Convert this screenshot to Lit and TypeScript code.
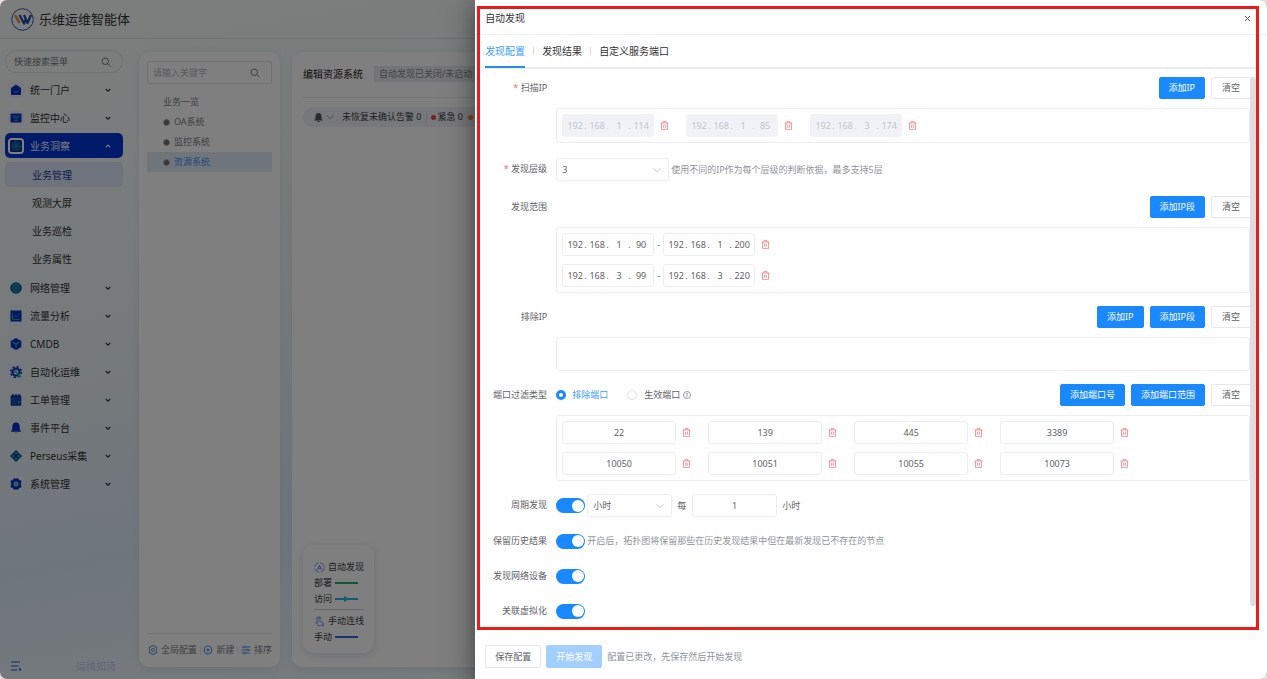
import { LitElement, html, svg, css, nothing, TemplateResult, SVGTemplateResult } from "lit";
import { customElement, property } from "lit/decorators.js";
import { classMap } from "lit/directives/class-map.js";

const shared = css`
  * {
    box-sizing: border-box;
  }
  button,
  input,
  select {
    font: inherit;
    color: inherit;
    margin: 0;
    padding: 0;
    border: 0;
    background: none;
    outline: none;
    min-width: 0;
  }
  button {
    cursor: pointer;
    white-space: nowrap;
  }
  a {
    color: inherit;
    text-decoration: none;
  }
  svg {
    display: block;
    flex: none;
  }
`;

/* ---------- icons ---------- */

const glyph = (size: number, box: string, body: SVGTemplateResult) => html`
  <svg width=${size} height=${size} viewBox=${box} fill="none" aria-hidden="true">${body}</svg>
`;

const searchIcon = glyph(10, "0 0 20 20", svg`
  <circle cx="8.5" cy="8.5" r="6.5" stroke="#5c5f65" stroke-width="1.6" />
  <path d="M13.5 13.5 18.5 18.5" stroke="#5c5f65" stroke-width="1.6" stroke-linecap="round" />`);

const chevron = (up: boolean, color: string) => glyph(6, "0 0 12 12", svg`
  <path d=${up ? "M1.5 8.5 6 4l4.5 4.5" : "M1.5 4 6 8.5 10.5 4"} stroke=${color} stroke-width="2.2" />`);

const wideChevron = (color: string) => html`
  <svg class="caret" width="8" height="8" viewBox="0 0 16 16" fill="none" aria-hidden="true">
    <path d="M1 4.5 8 11.5 15 4.5" stroke=${color} stroke-width="1.6" />
  </svg>
`;

const trashIcon = glyph(9, "0 0 18 18", svg`
  <path d="M1 4h16M6 4V1.2h6V4M3 4v12.8h12V4M7.2 7.5v6M10.8 7.5v6" stroke="#f08080" stroke-width="1.6" />`);

const NAVY = "#0a2ec4";
const MINT = "#18c79a";
const menuIcons: Record<string, SVGTemplateResult> = {
  home: svg`<path d="M12 1 22 8v12a2 2 0 0 1-2 2H4a2 2 0 0 1-2-2V8z" fill=${NAVY} />
    <path d="M8 14.5c1.5 3 6.5 3 8 0" stroke=${MINT} stroke-width="2" stroke-linecap="round" />`,
  monitor: svg`<rect x="1" y="3" width="22" height="18" rx="1.5" fill=${NAVY} />
    <path d="M4 8h16M8 17h8M12 11v6M6 13l4-3 4 3 4-3" stroke=${MINT} stroke-width="1.3" />`,
  insight: svg`<rect x="0" y="0" width="24" height="24" rx="3" fill="#06309c" />
    <circle cx="12" cy="12" r="8" stroke=${MINT} stroke-width="1.8" stroke-dasharray="5 1.6" />
    <circle cx="12" cy="12" r="3" stroke=${MINT} stroke-width="1.8" />`,
  globe: svg`<circle cx="12" cy="12" r="11.5" fill="#0b3fa6" />
    <path d="M1 12h22M3 6.5h18M3 17.5h18M12 1v22" stroke=${MINT} stroke-width="1.3" />
    <ellipse cx="12" cy="12" rx="5.5" ry="11" stroke=${MINT} stroke-width="1.3" />`,
  chart: svg`<rect x="1" y="1" width="22" height="22" rx="1" fill=${NAVY} />
    <path d="M5 5v14h14" stroke=${MINT} stroke-width="1.5" />
    <path d="m7 15 4-5 3 3 5-6" stroke=${MINT} stroke-width="1.5" />`,
  cube: svg`<path d="M12 0 22.5 6v12L12 24 1.5 18V6z" fill=${NAVY} />
    <path d="m5 8 7 4 7-4M12 12v7" stroke=${MINT} stroke-width="2.4" />`,
  auto: svg`<circle cx="12" cy="12" r="7" stroke=${NAVY} stroke-width="4" />
    <circle cx="12" cy="12" r="10.5" stroke=${NAVY} stroke-width="3" stroke-dasharray="4.2 4.05" />
    <path d="m10 10 12 12" stroke=${MINT} stroke-width="3.4" />
    <circle cx="11" cy="11" r="3" fill=${MINT} />`,
  order: svg`<rect x="1.5" y="2.5" width="21" height="21" rx="1" fill="#0b36b4" />
    <path d="M6 0v5M12 0v5M18 0v5" stroke=${NAVY} stroke-width="2.6" />
    <path d="M4 9h16M4 14h9M4 19h9M8 7v14" stroke="#1b8fae" stroke-width="1.2" />
    <path d="M15 14h5l-2.5 7z" fill=${MINT} />`,
  bell: svg`<path d="M12 1c5 0 7.5 4 7.5 8.500V15l3 4.500h-21l3-4.500V9.500C4.500 5 7 1 12 1z" fill=${NAVY} />
    <path d="M9.500 21h5L12 23.500z" fill=${MINT} />`,
  diamond: svg`<path d="m12 0 12 12-12 12L0 12z" fill="#0d4a9c" />
    <path d="m12 4 2.500 2.500L12 9 9.500 6.500zM12 15l2.500 2.500L12 20l-2.500-2.500zM6.500 9.500 9 12l-2.500 2.500L4 12zM17.500 9.500 20 12l-2.500 2.500L15 12z" fill=${MINT} />`,
  system: svg`<path d="M7 1h10l1.500 3.500 4 .5v5l-1.500 2 1.500 2v5l-4 .5L17 23H7l-1.500-3.500-4-.5v-5L3 12l-1.500-2V5l4-.5z" fill=${NAVY} />
    <circle cx="12" cy="12" r="5" fill="#9fc4e8" /><circle cx="12" cy="12" r="3" fill=${MINT} />`,
};

/* ---------- side navigation ---------- */

interface MenuEntry {
  icon: string;
  text: string;
  children?: string[];
}

const MENU: MenuEntry[] = [
  { icon: "home", text: "统一门户" },
  { icon: "monitor", text: "监控中心" },
  { icon: "insight", text: "业务洞察", children: ["业务管理", "观测大屏", "业务巡检", "业务属性"] },
  { icon: "globe", text: "网络管理" },
  { icon: "chart", text: "流量分析" },
  { icon: "cube", text: "CMDB" },
  { icon: "auto", text: "自动化运维" },
  { icon: "order", text: "工单管理" },
  { icon: "bell", text: "事件平台" },
  { icon: "diamond", text: "Perseus采集" },
  { icon: "system", text: "系统管理" },
];

@customElement("side-nav")
class SideNav extends LitElement {
  static styles = [
    shared,
    css`
      :host {
        display: flex;
        flex-direction: column;
        width: 128px;
        flex: none;
        padding: 11px 5px 5px;
        font-size: 10px;
        line-height: 16px;
        color: #303133;
      }
      .search {
        display: flex;
        align-items: center;
        height: 23px;
        padding: 0 11px 0 8px;
        border: 1px solid #dfe3e6;
        border-radius: 12px;
        font-size: 9px;
      }
      .search input {
        flex: 1;
      }
      .search input::placeholder {
        color: #77797d;
      }
      nav {
        display: flex;
        flex-direction: column;
        gap: 3px;
        margin-top: 4px;
      }
      .sub {
        display: flex;
        flex-direction: column;
        gap: 3px;
        margin: 1px 0;
      }
      .entry {
        display: flex;
        align-items: center;
        width: 100%;
        height: 25px;
        padding: 0 12px 0 3px;
        border-radius: 5px;
        text-align: left;
      }
      .entry .name {
        flex: 1;
      }
      .badge {
        display: grid;
        place-items: center;
        width: 16px;
        height: 16px;
        margin-right: 6px;
        border-radius: 4px;
        background: #e9eeff99;
      }
      .open {
        background: #0335d4;
        color: #e6ebff;
      }
      .open .badge {
        background: #ffffff;
      }
      .child {
        display: flex;
        align-items: center;
        height: 25px;
        padding-left: 27px;
        border-radius: 5px;
      }
      .current {
        background: #dfe6fa;
        color: #1c3c9c;
      }
      .bottom {
        display: flex;
        align-items: center;
        justify-content: space-between;
        margin-top: auto;
        padding: 0 7px 0 5px;
        color: #c5cdf2;
      }
    `,
  ];

  render() {
    return html`
      <label class="search">
        <input type="text" placeholder="快速搜索菜单" aria-label="快速搜索菜单" />
        ${searchIcon}
      </label>
      <nav>
        ${MENU.map(
          (m) => html`
            <button class=${classMap({ entry: true, open: !!m.children })}>
              <span class="badge">${glyph(12, "0 0 24 24", menuIcons[m.icon])}</span>
              <span class="name">${m.text}</span>
              ${chevron(!!m.children, m.children ? "#e6ebff" : "#303133")}
            </button>
            ${m.children
              ? html`<div class="sub">
                  ${m.children.map(
                    (c, i) => html`<a href="#" class=${classMap({ child: true, current: i === 0 })}>${c}</a>`
                  )}
                </div>`
              : nothing}
          `
        )}
      </nav>
      <div class="bottom">
        ${glyph(12, "0 0 24 24", svg`
          <path d="M2 4h18M2 12h15M2 20h12" stroke="#2b50c8" stroke-width="2.4" />
          <path d="M17 16.500h5v5h-2.500z" fill="#2b50c8" />`)}
        <span>运维如诗</span>
      </div>
    `;
  }
}

/* ---------- resource tree ---------- */

@customElement("resource-tree")
class ResourceTree extends LitElement {
  static styles = [
    shared,
    css`
      :host {
        display: flex;
        flex-direction: column;
        width: 141px;
        flex: none;
        padding: 9px 8px;
        border-radius: 10px;
        background: #ffffff;
        box-shadow: 0 2px 8px #7f95b030;
        font-size: 9px;
        line-height: 14px;
        color: #7b7d82;
      }
      .search {
        display: flex;
        align-items: center;
        height: 23px;
        padding: 0 11px 0 5px;
        border: 1px solid #e3e4e6;
        border-radius: 2px;
      }
      .search input {
        flex: 1;
      }
      .search input::placeholder {
        color: #b4b6ba;
      }
      .tree {
        display: flex;
        flex-direction: column;
        margin-top: 8px;
      }
      .node {
        display: flex;
        align-items: center;
        gap: 4px;
        height: 20px;
        padding-left: 16px;
      }
      .dot {
        width: 7px;
        height: 7px;
        border: 1px solid #b0b0b0;
        border-radius: 50%;
        background: #6e6e6e;
      }
      .picked {
        background: #e0ebf8;
        color: #3f93ee;
      }
      .tools {
        display: flex;
        align-items: center;
        justify-content: space-between;
        margin-top: auto;
        padding: 9px 0 1px 1px;
        border-top: 1px solid #e3e4e6;
      }
      .tools button {
        display: flex;
        align-items: center;
        gap: 3px;
      }
      .bar {
        width: 1px;
        height: 9px;
        background: #e8e8e8;
      }
    `,
  ];

  render() {
    const blue = "#3a86e0";
    return html`
      <label class="search">
        <input type="text" placeholder="请输入关键字" aria-label="请输入关键字" />
        ${searchIcon}
      </label>
      <div class="tree">
        <a href="#" class="node">业务一览</a>
        ${["OA系统", "监控系统", "资源系统"].map(
          (t, i) => html`<a href="#" class=${classMap({ node: true, picked: i === 2 })}><i class="dot"></i>${t}</a>`
        )}
      </div>
      <div class="tools">
        <button>
          ${glyph(10, "0 0 20 20", svg`
            <path d="M7 1.500h6l1 2.500 3.500.500v4L16 10l1.500 1.500v4L14 16l-1 2.500H7L6 16l-3.500-.500v-4L4 10 2.500 8.500v-4L6 4z" stroke=${blue} stroke-width="1.800" />
            <circle cx="10" cy="10" r="3" stroke=${blue} stroke-width="1.800" />`)}
          全局配置
        </button>
        <i class="bar"></i>
        <button>
          ${glyph(10, "0 0 20 20", svg`
            <circle cx="10" cy="10" r="8" stroke=${blue} stroke-width="1.800" />
            <path d="M10 6v8M6 10h8" stroke=${blue} stroke-width="1.800" />`)}
          新建
        </button>
        <i class="bar"></i>
        <button>
          ${glyph(10, "0 0 20 20", svg`
            <path d="M1 4h18M1 10h18M1 16h18" stroke=${blue} stroke-width="1.700" />
            <circle cx="7" cy="4" r="2" fill="#fff" stroke=${blue} stroke-width="1.500" />
            <circle cx="13" cy="10" r="2" fill="#fff" stroke=${blue} stroke-width="1.500" />
            <circle cx="7" cy="16" r="2" fill="#fff" stroke=${blue} stroke-width="1.500" />`)}
          排序
        </button>
      </div>
    `;
  }
}

/* ---------- topology editor ---------- */

@customElement("topology-editor")
class TopologyEditor extends LitElement {
  static styles = [
    shared,
    css`
      :host {
        display: flex;
        flex-direction: column;
        flex: 1;
        min-width: 0;
        padding: 14px 11px;
        border-radius: 10px;
        background: #ffffff;
        box-shadow: 0 2px 8px #7f95b030;
        font-size: 9px;
        line-height: 16px;
        color: #3c3e42;
        white-space: nowrap;
      }
      header {
        display: flex;
        align-items: center;
        gap: 11px;
        padding-bottom: 15px;
        border-bottom: 1px solid #e6e8ec;
      }
      h1 {
        margin: 0;
        font-size: 10px;
        font-weight: 400;
        line-height: 16px;
        color: #1f2023;
      }
      .tag {
        padding: 0 5px;
        background: #e9ebf1;
        color: #85878d;
      }
      .alerts {
        display: flex;
        align-items: center;
        height: 20px;
        margin-top: 9px;
        padding-left: 11px;
        border-radius: 10px;
        background: #eef0f7;
      }
      .caret {
        margin: 0 8px 0 3px;
      }
      .bar {
        width: 1px;
        height: 9px;
        margin: 0 4px;
        background: #d8dbe2;
      }
      .dot {
        width: 5px;
        height: 5px;
        margin: 0 2px 0 5px;
        border-radius: 50%;
      }
      .bar + .dot {
        margin-left: 0;
      }
      .red {
        background: #f5454a;
      }
      .orange {
        background: #ff8a1f;
      }
      .legend {
        display: flex;
        flex-direction: column;
        align-self: flex-start;
        width: 71px;
        margin-top: auto;
        padding: 14px 10px 8px 11px;
        border-radius: 10px;
        background: #ffffff;
        box-shadow: 0 2px 8px #5a6b8838;
      }
      .line {
        display: flex;
        align-items: center;
        gap: 3px;
      }
      .line.split {
        margin-top: 2px;
        padding-top: 3px;
        border-top: 1px solid #cfd1d6;
      }
    `,
  ];

  render() {
    const stroke = (color: string, arrow = false) => html`
      <svg width="23" height="6" viewBox="0 0 23 6" aria-hidden="true">
        <path d="M0 3h23" stroke=${color} stroke-width="2" />
        ${arrow ? svg`<path d="M9 0 15 3 9 6z" fill=${color} />` : nothing}
      </svg>
    `;
    return html`
      <header>
        <h1>编辑资源系统</h1>
        <span class="tag">自动发现已关闭/未启动</span>
      </header>
      <div class="alerts">
        ${glyph(9, "0 0 18 18", svg`
          <path d="M9 0c4 0 6 3 6 6.500V11l2.500 4H.5L3 11V6.500C3 3 5 0 9 0zM6 16h6l-1.500 2h-3z" fill="#555759" />`)}
        ${wideChevron("#85878d")}
        <span>未恢复未确认告警 0</span><i class="bar"></i>
        <i class="dot red"></i><span>紧急 0</span>
        <i class="dot orange"></i><span>严重 0</span>
      </div>
      <div class="legend">
        <div class="line">
          ${glyph(11, "0 0 22 22", svg`
            <circle cx="11" cy="11" r="9.500" stroke="#5f86f2" stroke-width="1.600" stroke-dasharray="12 3" />
            <path d="m7 16 4-10 4 10M8.500 12.500h5" stroke="#3f6bea" stroke-width="1.600" />`)}
          自动发现
        </div>
        <div class="line">部署 ${stroke("#1fae6a")}</div>
        <div class="line">访问 ${stroke("#2fb9dd", true)}</div>
        <div class="line split">
          ${glyph(11, "0 0 22 22", svg`
            <path d="M8 15V5a2 2 0 0 1 4 0v6l6 1.500V16M8 12l-3-1-1.500 1.500L8 19h6" stroke="#5f86f2" stroke-width="1.600" />
            <path d="M4.500 7A5.500 5.500 0 0 1 15 5M17.500 15v6M14.500 18h6" stroke="#5f86f2" stroke-width="1.600" />`)}
          手动连线
        </div>
        <div class="line">手动 ${stroke("#3566e0")}</div>
      </div>
    `;
  }
}

/* ---------- segmented IPv4 field ---------- */

@customElement("ip-field")
class IpField extends LitElement {
  @property() value = "";
  @property({ type: Boolean, reflect: true }) disabled = false;

  static styles = [
    shared,
    css`
      :host {
        display: flex;
        align-items: center;
        width: 92px;
        height: 23px;
        box-sizing: border-box;
        padding: 0 3px;
        border: 1px solid #ebedf0;
        border-radius: 3px;
        background: #ffffff;
      }
      :host([disabled]) {
        background: #f1f2f7;
        border-color: #f1f2f7;
        color: #c0c4cc;
      }
      input {
        width: 18px;
        text-align: center;
      }
      .point {
        width: 4px;
      }
    `,
  ];

  render() {
    return this.value.split(".").map(
      (part, i) => html`${i ? html`<span class="point">.</span>` : nothing}<input
          type="text"
          .value=${part}
          ?disabled=${this.disabled}
          aria-label=${`IP ${i + 1}`}
        />`
    );
  }
}

/* ---------- discovery drawer ---------- */

@customElement("discovery-drawer")
class DiscoveryDrawer extends LitElement {
  static styles = [
    shared,
    css`
      :host {
        display: flex;
        flex-direction: column;
        background: #ffffff;
        box-shadow: 0 6px 30px 5px #00000040, 0 8px 16px 0 #00000040;
        font-size: 9px;
        line-height: 14px;
        color: #606266;
      }
      .title {
        display: flex;
        align-items: center;
        justify-content: space-between;
        height: 35px;
        padding: 2px 15px 0 10px;
        border-bottom: 1px solid #f0f1f3;
      }
      h2 {
        margin: 0;
        font-size: 10px;
        font-weight: 400;
        line-height: 16px;
        color: #303133;
      }
      .tabs {
        display: flex;
        align-items: center;
        height: 34px;
        margin: 0 11px 0 10px;
        border-bottom: 2px solid #e9ebef;
        font-size: 10px;
        line-height: 16px;
        color: #303133;
      }
      .tabs button {
        height: 34px;
        padding-top: 2px;
        border-bottom: 2px solid transparent;
      }
      .tabs .on {
        color: #409eff;
        border-bottom-color: #2a8cf0;
      }
      .tabs .sep {
        width: 1px;
        height: 8px;
        margin: 0 8px;
        background: #d8dade;
      }
      .body {
        display: flex;
        flex: 1;
        min-height: 0;
        padding: 8px 11px 0 10px;
      }
      form {
        display: flex;
        flex-direction: column;
        flex: 1;
        min-width: 0;
        gap: 13px;
      }
      .track {
        width: 6px;
      }
      .thumb {
        width: 6px;
        height: 96%;
        border-radius: 3px;
        background: #dcdee0;
      }
      .item {
        display: grid;
        grid-template-columns: 62px minmax(0, 1fr);
        column-gap: 9px;
        row-gap: 9px;
      }
      .item.loose {
        margin-bottom: 2px;
      }
      .caption {
        line-height: 22px;
        text-align: right;
        white-space: nowrap;
      }
      .need::before {
        content: "* ";
        color: #f56c6c;
      }
      .line {
        display: flex;
        align-items: center;
        min-height: 22px;
      }
      .actions {
        display: flex;
        gap: 6px;
        margin-left: auto;
      }
      .btn {
        height: 22px;
        padding: 0 9px;
        border: 1px solid #e6e8eb;
        border-radius: 2px;
        background: #ffffff;
      }
      .primary {
        border-color: #1a88ff;
        background: #1a88ff;
        color: #ffffff;
      }
      .actions .btn:last-child {
        min-width: 39px;
        border-right: 0;
        border-radius: 2px 0 0 2px;
      }
      .box {
        grid-column: 2;
        display: flex;
        flex-direction: column;
        gap: 8px;
        min-height: 34px;
        padding: 5px;
        border: 1px solid #ebedf0;
        border-radius: 3px;
      }
      .cells {
        display: flex;
        gap: 17px;
      }
      .cell {
        display: flex;
        align-items: center;
      }
      .cell button {
        margin-left: 6px;
      }
      .dash {
        width: 9px;
        text-align: center;
      }
      .ports {
        display: grid;
        grid-template-columns: repeat(4, 129px);
        gap: 8px 17px;
      }
      .field {
        height: 23px;
        border: 1px solid #ebedf0;
        border-radius: 3px;
        text-align: center;
      }
      .port {
        width: 114px;
      }
      .pick {
        display: grid;
        align-items: center;
      }
      .pick select,
      .pick svg {
        grid-area: 1 / 1;
      }
      .pick svg {
        justify-self: end;
        margin-right: 8px;
        pointer-events: none;
      }
      .pick select {
        appearance: none;
        height: 23px;
        padding: 0 5px;
        border: 1px solid #ebedf0;
        border-radius: 3px;
      }
      .level select {
        width: 113px;
      }
      .unit {
        margin-left: 2px;
      }
      .unit select,
      .every {
        width: 85px;
      }
      .hint {
        margin-left: 2px;
        color: #909399;
      }
      .radio {
        display: flex;
        align-items: center;
        gap: 6px;
        margin-right: 19px;
      }
      .radio input {
        appearance: none;
        width: 10px;
        height: 10px;
        border: 1px solid #e0e2e6;
        border-radius: 50%;
      }
      .radio input:checked {
        border: 3px solid #1a88ff;
      }
      .radio input:checked + span {
        color: #409eff;
      }
      .radio.last {
        gap: 7px;
        margin-right: 3px;
      }
      .switch {
        appearance: none;
        display: flex;
        align-items: center;
        justify-content: flex-end;
        width: 29px;
        height: 15px;
        padding: 0 1px;
        border-radius: 8px;
        background: #1a88ff;
      }
      .switch::before {
        content: "";
        width: 12px;
        height: 12px;
        border-radius: 50%;
        background: #ffffff;
      }
      .gap {
        margin: 0 6px 0 5px;
      }
      .foot {
        display: flex;
        align-items: center;
        gap: 5px;
        padding: 17px 11px 11px 10px;
      }
      .foot .btn {
        height: 23px;
      }
      .foot .hint {
        margin-left: 0;
      }
      .muted {
        border-color: #a3cfff;
        background: #a3cfff;
        color: #ffffff;
      }
    `,
  ];

  private del() {
    return html`<button type="button" aria-label="删除">${trashIcon}</button>`;
  }

  private actions(...names: string[]) {
    return html`
      <div class="actions">
        ${names.map((n) => html`<button type="button" class="btn primary">${n}</button>`)}
        <button type="button" class="btn">清空</button>
      </div>
    `;
  }

  private toggle(id: string, text: string, rest: TemplateResult | typeof nothing = nothing) {
    return html`
      <div class="item">
        <label class="caption" for=${id}>${text}</label>
        <div class="line"><input class="switch" type="checkbox" role="switch" id=${id} checked />${rest}</div>
      </div>
    `;
  }

  render() {
    const ports = ["22", "139", "445", "3389", "10050", "10051", "10055", "10073"];
    const ranges = [
      ["192.168.1.90", "192.168.1.200"],
      ["192.168.3.99", "192.168.3.220"],
    ];
    return html`
      <div class="title">
        <h2>自动发现</h2>
        <button aria-label="关闭">
          ${glyph(9, "0 0 18 18", svg`<path d="m4 4 10 10M14 4 4 14" stroke="#4c4f55" stroke-width="2" />`)}
        </button>
      </div>
      <div class="tabs" role="tablist">
        <button class="on" role="tab" aria-selected="true">发现配置</button><i class="sep"></i>
        <button role="tab">发现结果</button><i class="sep"></i>
        <button role="tab">自定义服务端口</button>
      </div>
      <div class="body">
        <form>
          <div class="item loose">
            <span class="caption need">扫描IP</span>
            <div class="line">${this.actions("添加IP")}</div>
            <div class="box">
              <div class="cells">
                ${["192.168.1.114", "192.168.1.85", "192.168.3.174"].map(
                  (ip) => html`<div class="cell"><ip-field value=${ip} disabled></ip-field>${this.del()}</div>`
                )}
              </div>
            </div>
          </div>
          <div class="item loose">
            <label class="caption need" for="level">发现层级</label>
            <div class="line">
              <div class="pick level">
                <select id="level">
                  <option>3</option>
                </select>
                ${wideChevron("#b4b8bf")}
              </div>
              <span class="hint">使用不同的IP作为每个层级的判断依据，最多支持5层</span>
            </div>
          </div>
          <div class="item">
            <span class="caption">发现范围</span>
            <div class="line">${this.actions("添加IP段")}</div>
            <div class="box">
              ${ranges.map(
                ([from, to]) => html`<div class="cell">
                  <ip-field value=${from}></ip-field><span class="dash">-</span><ip-field value=${to}></ip-field>${this.del()}
                </div>`
              )}
            </div>
          </div>
          <div class="item">
            <span class="caption">排除IP</span>
            <div class="line">${this.actions("添加IP", "添加IP段")}</div>
            <div class="box"></div>
          </div>
          <div class="item">
            <span class="caption">端口过滤类型</span>
            <div class="line">
              <label class="radio"><input type="radio" name="port-mode" checked /><span>排除端口</span></label>
              <label class="radio last"><input type="radio" name="port-mode" /><span>生效端口</span></label>
              ${glyph(8, "0 0 16 16", svg`
                <circle cx="8" cy="8" r="7" stroke="#606266" stroke-width="1.300" />
                <path d="M8 4v5M8 10.500v1.800" stroke="#606266" stroke-width="1.600" />`)}
              ${this.actions("添加端口号", "添加端口范围")}
            </div>
            <div class="box">
              <div class="ports">
                ${ports.map(
                  (p) => html`<div class="cell">
                    <input class="field port" type="text" .value=${p} aria-label="端口号" />${this.del()}
                  </div>`
                )}
              </div>
            </div>
          </div>
          ${this.toggle(
            "cycle",
            "周期发现",
            html`
              <div class="pick unit">
                <select aria-label="周期单位">
                  <option>小时</option>
                </select>
                ${wideChevron("#b4b8bf")}
              </div>
              <span class="gap">每</span>
              <input class="field every" type="text" value="1" aria-label="周期数值" />
              <span class="gap">小时</span>
            `
          )}
          ${this.toggle(
            "history",
            "保留历史结果",
            html`<span class="hint">开启后，拓扑图将保留那些在历史发现结果中但在最新发现已不存在的节点</span>`
          )}
          ${this.toggle("devices", "发现网络设备")} ${this.toggle("virtual", "关联虚拟化")}
        </form>
        <div class="track"><div class="thumb"></div></div>
      </div>
      <div class="foot">
        <button class="btn">保存配置</button>
        <button class="btn muted">开始发现</button>
        <span class="hint">配置已更改，先保存然后开始发现</span>
      </div>
    `;
  }
}

/* ---------- page ---------- */

@customElement("app-root")
class AppRoot extends LitElement {
  static styles = [
    shared,
    css`
      :host {
        display: block;
        height: 100vh;
        background: #ecdcda;
        font-family: "Noto Sans", "Noto Sans CJK SC", sans-serif;
      }
      .window {
        position: relative;
        display: flex;
        flex-direction: column;
        height: 100%;
        overflow: hidden;
        border-radius: 7px;
        background: linear-gradient(170deg, #f8fcfb 0%, #f4faf9 20%, #eaf3f8 45%, #deebfa 64%, #f1f8fa 84%, #f8fdfb 100%);
      }
      .top {
        display: flex;
        align-items: center;
        gap: 5px;
        height: 39px;
        padding-left: 11px;
        border-bottom: 1px solid #dde3e3;
        font-size: 13px;
        line-height: 20px;
        color: #303133;
      }
      .main {
        display: flex;
        flex: 1;
        min-height: 0;
      }
      .panels {
        display: flex;
        flex: 1;
        gap: 12px;
        min-width: 0;
        padding: 13px 11px 12px;
      }
      .mask {
        position: absolute;
        inset: 0;
        background: rgba(0, 0, 0, 0.5);
      }
      discovery-drawer {
        position: absolute;
        top: 0;
        right: 0;
        bottom: 0;
        width: 62.5%;
      }
      .marker {
        position: absolute;
        top: 6px;
        right: 8px;
        bottom: 49px;
        left: calc(37.5% + 2px);
        border: 3px solid #ea1b1d;
        pointer-events: none;
      }
    `,
  ];

  render() {
    return html`
      <div class="window">
        <div class="top">
          ${glyph(23, "0 0 46 46", svg`
            <circle cx="23" cy="23" r="21.500" stroke="#2a50b4" stroke-width="2" />
            <path d="m8 14 9 16" stroke="#f08a3c" stroke-width="5" />
            <path d="m17 14 9 17 4-10M26 14l7 16 7-16" stroke="#2348b0" stroke-width="4.500" stroke-linejoin="round" />`)}
          <span>乐维运维智能体</span>
        </div>
        <div class="main">
          <side-nav></side-nav>
          <div class="panels">
            <resource-tree></resource-tree>
            <topology-editor></topology-editor>
          </div>
        </div>
        <div class="mask"></div>
        <discovery-drawer></discovery-drawer>
        <div class="marker"></div>
      </div>
    `;
  }
}
